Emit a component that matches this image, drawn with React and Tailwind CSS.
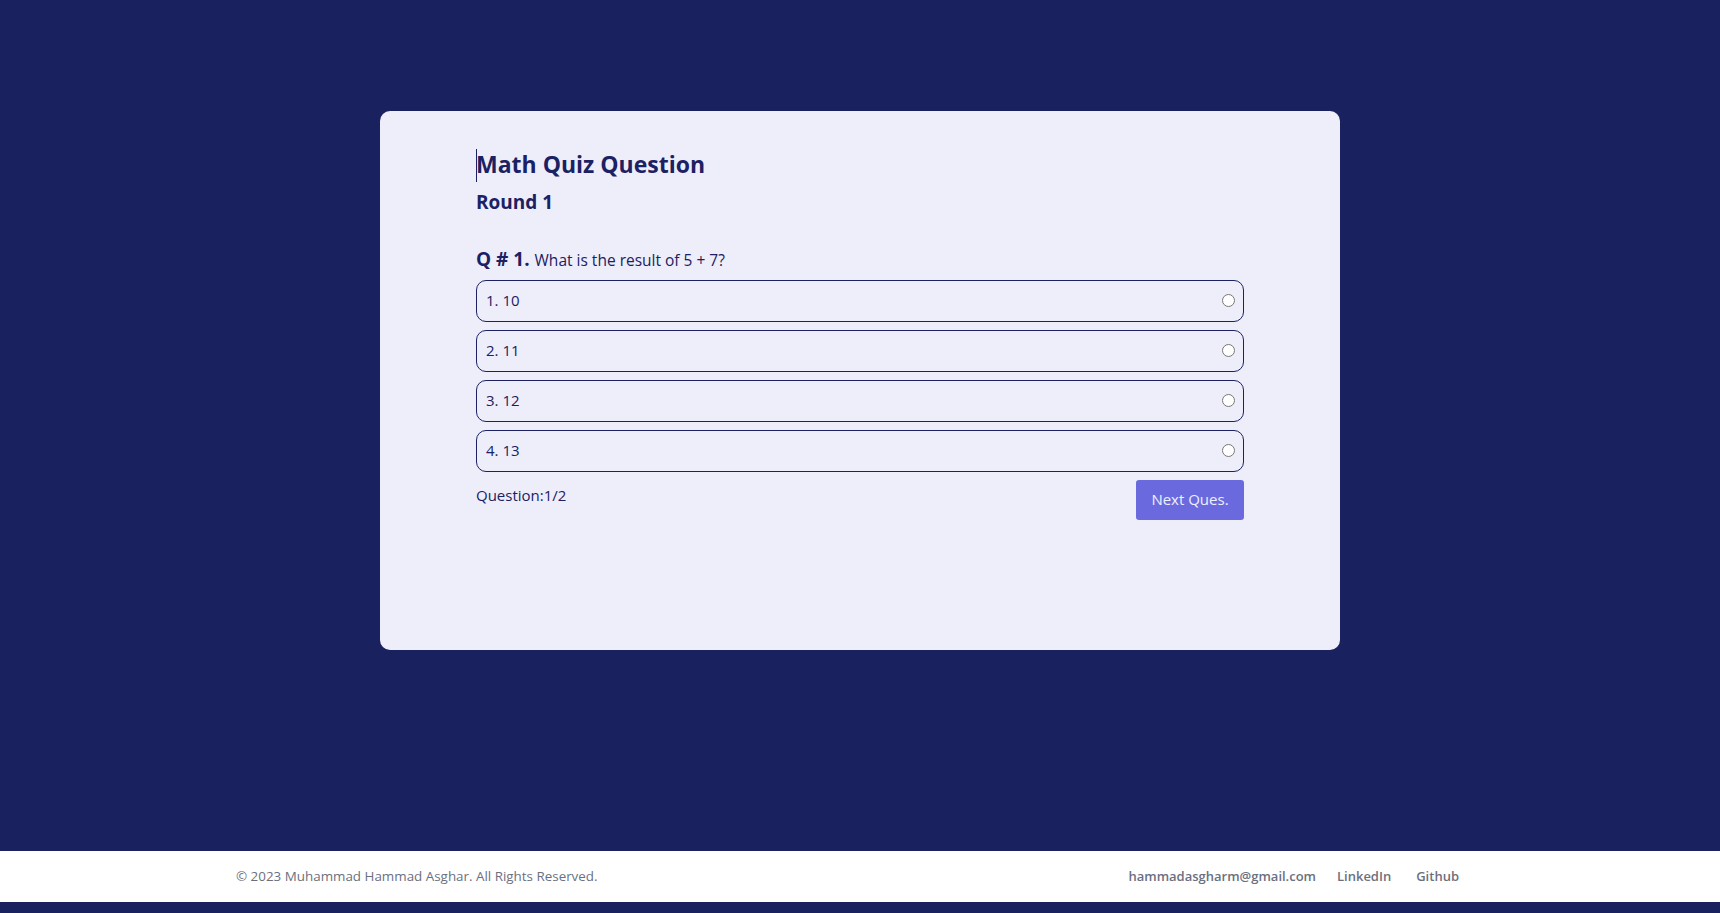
import React, { useState } from 'react';

const options = ['10', '11', '12', '13'];

const QuizCard = () => {
  const [picked, setPicked] = useState(null);

  return (
    <div className="w-[960px] h-[539px] rounded-[10px] bg-[#eeeefb] px-24 pt-[37px] text-[#1b2162]">
      <h1 className="relative text-[23px] leading-[32px] font-bold">
        <span className="absolute left-0 top-[1px] h-[33px] w-px bg-[#1b2162]" />
        Math Quiz Question
      </h1>
      <h2 className="mt-[8px] text-[19px] leading-[28px] font-bold">Round 1</h2>

      <p className="mt-[29px] flex items-baseline gap-[5px]">
        <span className="text-[19px] font-bold">Q # 1.</span>
        <span className="text-[15.5px]">What is the result of 5 + 7?</span>
      </p>

      <div className="mt-[6px] flex flex-col gap-2">
        {options.map((opt, i) => (
          <label
            key={opt}
            className="flex h-[42px] items-center justify-between rounded-[10px] border border-[#1b2162] pl-[9px] pr-[8px] text-[15px] cursor-pointer"
          >
            <span>
              {i + 1}. {opt}
            </span>
            <input
              type="radio"
              name="answer"
              checked={picked === i}
              onChange={() => setPicked(i)}
              className="h-[13px] w-[13px] m-0"
            />
          </label>
        ))}
      </div>

      <div className="mt-2 flex items-start justify-between">
        <span className="mt-[4px] text-[15px]">Question:1/2</span>
        <button className="h-[40px] w-[108px] rounded-[3px] bg-[#6a6ade] text-[15px] text-[#eef0ff]">
          Next Ques.
        </button>
      </div>
    </div>
  );
};

const Footer = () => (
  <footer className="h-[51px] bg-white">
    <div className="flex h-full items-center justify-between pl-[236px] pr-[261px] text-[13.4px] text-[#6b7080]">
      <span>© 2023 Muhammad Hammad Asghar. All Rights Reserved.</span>
      <div className="flex items-center font-semibold text-[13px]">
        <a href="#" className="mr-[21px]">hammadasgharm@gmail.com</a>
        <a href="#" className="mr-[25px]">LinkedIn</a>
        <a href="#">Github</a>
      </div>
    </div>
  </footer>
);

export default function App() {
  return (
    <div className="min-h-[913px] bg-[#19215e] pb-[11px] font-['Open_Sans',sans-serif]">
      <main className="flex h-[851px] justify-center pt-[111px]">
        <QuizCard />
      </main>
      <Footer />
    </div>
  );
}
